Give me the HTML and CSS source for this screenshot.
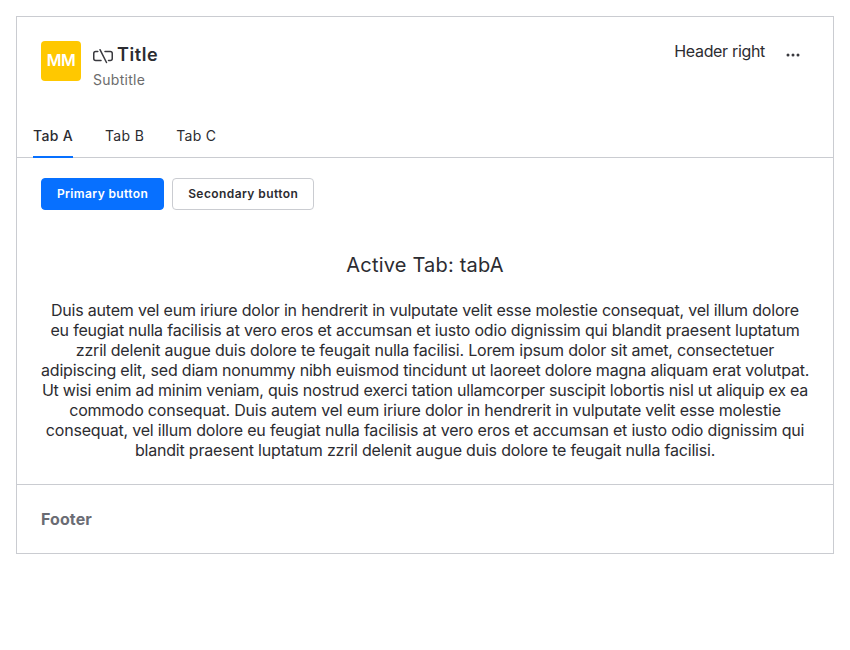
FILE: index.html
```html
<!DOCTYPE html>
<html lang="en">
<head>
<meta charset="utf-8">
<title>Title</title>
<link rel="stylesheet" href="styles.css">
</head>
<body>
<section class="panel">
  <header class="header">
    <div class="avatar">MM</div>
    <div class="heading">
      <h1 class="title"><svg class="link-icon" viewBox="0 0 20 20"><path d="M4.800 5.500H2.750a2 2 0 0 0-2 2v5a2 2 0 0 0 2 2H8M15.500 14.500h1.750a2 2 0 0 0 2-2v-5a2 2 0 0 0-2-2H12M7 3.700l6.500 12.800"/></svg><span>Title</span></h1>
      <p class="subtitle">Subtitle</p>
    </div>
    <div class="header-right">Header right</div>
    <button class="more" aria-label="More"><svg viewBox="0 0 14 4"><circle cx="2" cy="2" r="1.500"/><circle cx="7" cy="2" r="1.500"/><circle cx="12" cy="2" r="1.500"/></svg></button>
  </header>
  <nav class="tabs">
    <a class="tab active">Tab A</a><a class="tab">Tab B</a><a class="tab">Tab C</a>
  </nav>
  <div class="actions">
    <button class="btn primary">Primary button</button>
    <button class="btn secondary">Secondary button</button>
  </div>
  <main class="content">
    <h2 class="content-title">Active Tab: tabA</h2>
    <p class="text">Duis autem vel eum iriure dolor in hendrerit in vulputate velit esse molestie consequat, vel illum dolore<br>
    eu feugiat nulla facilisis at vero eros et accumsan et iusto odio dignissim qui blandit praesent luptatum<br>
    zzril delenit augue duis dolore te feugait nulla facilisi. Lorem ipsum dolor sit amet, consectetuer<br>
    adipiscing elit, sed diam nonummy nibh euismod tincidunt ut laoreet dolore magna aliquam erat volutpat.<br>
    <span class="tight">Ut wisi enim ad minim veniam, quis nostrud exerci tation ullamcorper suscipit lobortis nisl ut aliquip ex ea</span><br>
    commodo consequat. Duis autem vel eum iriure dolor in hendrerit in vulputate velit esse molestie<br>
    consequat, vel illum dolore eu feugiat nulla facilisis at vero eros et accumsan et iusto odio dignissim qui<br>
    blandit praesent luptatum zzril delenit augue duis dolore te feugait nulla facilisi.</p>
  </main>
  <footer class="footer">Footer</footer>
</section>
</body>
</html>
```
FILE: styles.css
```css
* { box-sizing: border-box; }
body { margin: 16px; background: #fff; color: #2c2c31; font: 16px/20px Inter, sans-serif; }
h1, h2, p { margin: 0; }
button { font-family: inherit; }
.panel { border: 1px solid #caccd1; height: 538px; display: flex; flex-direction: column; }
.header { display: flex; height: 97px; padding: 24px 24px 0; }
.avatar { width: 40px; height: 40px; border-radius: 4px; background: #ffc800; color: #fff; font-weight: 600; line-height: 38px; text-align: center; letter-spacing: -0.5px; }
.heading { flex: 1; margin-left: 12px; }
.title { display: flex; align-items: center; gap: 4px; height: 28px; margin-bottom: 1px; font-size: 18px; font-weight: 600; letter-spacing: 0.6px; }
.link-icon { width: 20px; height: 20px; margin-top: 2px; fill: none; stroke: #39393e; stroke-width: 1.500; stroke-linecap: round; }
.subtitle { font-size: 14px; color: #6c6c6c; letter-spacing: 0.28px; }
.header-right { letter-spacing: -0.33px; }
.more { width: 32px; height: 28px; margin: 0 0 0 12px; padding: 0; border: 0; background: none; }
.more svg { display: block; width: 14px; height: 4px; margin: auto; fill: #39393e; }
.tabs { display: flex; gap: 32px; height: 44px; padding: 0 16px; border-bottom: 1px solid #caccd1; }
.tab { height: 44px; font-size: 14px; line-height: 44px; letter-spacing: 0.32px; }
.active { font-weight: 500; border-bottom: 2px solid #0770ff; }
.actions { display: flex; gap: 8px; padding: 20px 24px 0; }
.btn { height: 32px; padding: 0 15px 2px; border: 1px solid #caccd1; border-radius: 4px; background: #fff; color: #2c2c31; font-size: 12px; font-weight: 600; letter-spacing: 0.37px; }
.primary { border-color: #0770ff; background: #0770ff; color: #fff; }
.secondary { letter-spacing: 0.42px; }
.content { flex: 1; padding: 40px 24px 0; text-align: center; }
.content-title { margin-bottom: 20px; font-size: 20px; line-height: 30px; font-weight: 400; letter-spacing: 0.19px; }
.text { white-space: nowrap; letter-spacing: -0.2px; }
.tight { letter-spacing: -0.235px; }
.footer { height: 69px; padding: 24px; border-top: 1px solid #caccd1; color: #6a6c74; font-weight: 700; letter-spacing: 0.1px; }
```
